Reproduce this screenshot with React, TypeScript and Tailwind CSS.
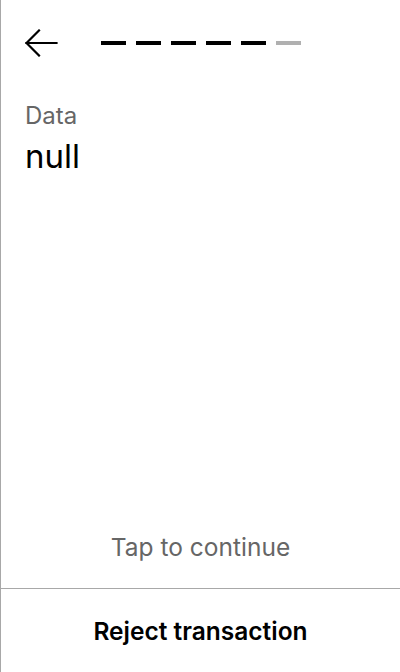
import React from "react";

export default function App() {
  const dashes = [true, true, true, true, true, false];
  return (
    <div
      className="w-[400px] h-[672px] bg-white border-l border-[#a8a8a8] flex flex-col text-black"
      style={{ fontFamily: "Inter, 'Noto Sans', sans-serif" }}
    >
      <div className="flex items-center h-[86px] pl-6 pt-0">
        <svg width="33" height="28" viewBox="0 0 33 28" fill="none" stroke="black" strokeWidth="2.2" strokeLinecap="square">
          <path d="M1.5 14H31.5" />
          <path d="M14 1.5L1.5 14L14 26.5" />
        </svg>
        <div className="flex gap-[10px] ml-[43px]">
          {dashes.map((on, i) => (
            <div key={i} className={`w-[25px] h-[4px] ${on ? "bg-black" : "bg-[#b0b0b0]"}`} />
          ))}
        </div>
      </div>
      <div className="px-6 pt-[16px] flex-1">
        <div className="text-[24px] leading-[28px] text-[#666666]">Data</div>
        <div className="text-[33px] leading-[40px] mt-[6px]">null</div>
      </div>
      <div className="text-center text-[24.5px] leading-[28px] text-[#666666] pb-[27px]">Tap to continue</div>
      <div className="border-t border-[#a8a8a8] h-[84px] pt-[2px] flex items-center justify-center">
        <span className="text-[24.5px] font-semibold">Reject transaction</span>
      </div>
    </div>
  );
}
